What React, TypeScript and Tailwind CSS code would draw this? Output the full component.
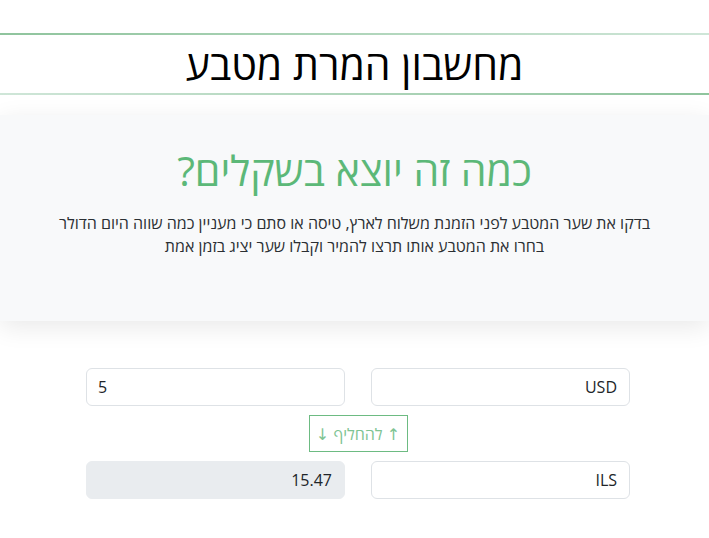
import { useState } from 'react';

export default function App() {
  const [amount, setAmount] = useState('5');
  const [from, setFrom] = useState('USD');
  const [to, setTo] = useState('ILS');
  const result = (parseFloat(amount || '0') * 3.094).toFixed(2);

  const swap = () => {
    setFrom(to);
    setTo(from);
  };

  return (
    <div dir="rtl" className="min-h-screen bg-white text-[#212529]" style={{ fontFamily: '"Open Sans", "DejaVu Sans", sans-serif' }}>
      {/* Header */}
      <div className="pt-[33px]">
        <div className="h-[2px] bg-gradient-to-l from-[#cfe6d8] to-[#8fc49d]" />
        <h1 className="h-[58px] flex items-center justify-center text-[41px] leading-none text-black">
          מחשבון המרת מטבע
        </h1>
        <div className="h-[2px] bg-gradient-to-l from-[#8fc49d] to-[#cfe6d8]" />
      </div>

      {/* Intro panel */}
      <div className="mt-[20px] bg-[#f8f9fa] shadow-[0_6px_24px_rgba(0,0,0,0.09)] h-[206px] pt-[35px] text-center">
        <h2 className="text-[41px] font-normal leading-none text-[#5cb878]">כמה זה יוצא בשקלים?</h2>
        <p className="mt-[21px] text-[16px] leading-[23px] text-[#2b2f33]">
          בדקו את שער המטבע לפני הזמנת משלוח לארץ, טיסה או סתם כי מעניין כמה שווה היום הדולר
          <br />
          בחרו את המטבע אותו תרצו להמיר וקבלו שער יציג בזמן אמת
        </p>
      </div>

      {/* Converter */}
      <div className="mt-[47px] mr-[79px] w-[544px] flex flex-col items-center">
        <div className="w-full grid grid-cols-2 gap-[26px]">
          <input
            value={from}
            onChange={(e) => setFrom(e.target.value)}
            className="h-[38px] px-3 border border-[#dee2e6] rounded-md bg-white text-[16px] text-[#212529] outline-none"
          />
          <input
            value={amount}
            onChange={(e) => setAmount(e.target.value)}
            className="h-[38px] px-[11px] border border-[#dee2e6] rounded-md bg-white text-[16px] text-[#212529] outline-none text-left"
            dir="ltr"
          />
        </div>
        <div className="my-[9px] border border-[#6dbb82] bg-white">
          <button
            onClick={swap}
            className="block h-[35px] w-[97px] text-[#7fc493] text-[16px] bg-white"
          >
            ↑ להחליף ↓
          </button>
        </div>
        <div className="w-full grid grid-cols-2 gap-[26px]">
          <input
            value={to}
            onChange={(e) => setTo(e.target.value)}
            className="h-[38px] px-3 border border-[#dee2e6] rounded-md bg-white text-[16px] text-[#212529] outline-none"
          />
          <input
            value={result}
            readOnly
            className="h-[38px] px-3 border border-[#e9ecef] rounded-md bg-[#e9ecef] text-[16px] text-[#212529] outline-none"
          />
        </div>
      </div>
    </div>
  );
}
